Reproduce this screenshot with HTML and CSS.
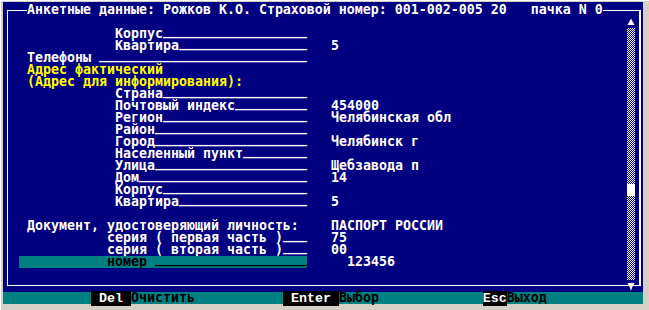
FILE: index.html
```html
<!DOCTYPE html>
<html lang="ru">
<head>
<meta charset="utf-8">
<title>Анкетные данные</title>
<link rel="stylesheet" href="styles.css">
</head>
<body>
<div class="window">
  <div class="screen">
    <div class="row title"><span class="caption">Анкетные данные: Рожков К.О. Страховой номер: 001-002-005 20   пачка N 0</span></div>
    <div class="main">
      <div class="content">
        <div class="row"></div>
        <div class="row"><span class="label sub">Корпус<span class="fill">__________________</span></span></div>
        <div class="row"><span class="label sub">Квартира<span class="fill">________________</span></span><span class="value">5</span></div>
        <div class="row"><span class="label top">Телефоны <span class="fill">__________________________</span></span></div>
        <div class="row heading">Адрес фактический</div>
        <div class="row heading">(Адрес для информирования):</div>
        <div class="row"><span class="label sub">Страна<span class="fill">__________________</span></span></div>
        <div class="row"><span class="label sub">Почтовый индекс<span class="fill">_________</span></span><span class="value">454000</span></div>
        <div class="row"><span class="label sub">Регион<span class="fill">__________________</span></span><span class="value">Челябинская обл</span></div>
        <div class="row"><span class="label sub">Район<span class="fill">___________________</span></span></div>
        <div class="row"><span class="label sub">Город<span class="fill">___________________</span></span><span class="value">Челябинск г</span></div>
        <div class="row"><span class="label sub">Населенный пункт<span class="fill">________</span></span></div>
        <div class="row"><span class="label sub">Улица<span class="fill">___________________</span></span><span class="value">Щебзавода п</span></div>
        <div class="row"><span class="label sub">Дом<span class="fill">_____________________</span></span><span class="value">14</span></div>
        <div class="row"><span class="label sub">Корпус<span class="fill">__________________</span></span></div>
        <div class="row"><span class="label sub">Квартира<span class="fill">________________</span></span><span class="value">5</span></div>
        <div class="row"></div>
        <div class="row"><span class="label top">Документ, удостоверяющий личность:</span><span class="value">ПАСПОРТ РОССИИ</span></div>
        <div class="row"><span class="label ser">серия ( первая часть )<span class="fill">___</span></span><span class="value">75</span></div>
        <div class="row"><span class="label ser">серия ( вторая часть )<span class="fill">___</span></span><span class="value">00</span></div>
        <div class="row selected"><span class="label">номер <span class="fill">___________________</span></span><span class="value">123456</span></div>
        <div class="row"></div>
      </div>
      <div class="scrollbar">
        <svg class="arrow" width="8" height="12" viewBox="0 0 8 12"><polygon points="0.5,9 7.5,9 4,2.5" fill="#fff"/></svg>
        <div class="track upper"></div>
        <div class="thumb"></div>
        <div class="track lower"></div>
        <svg class="arrow" width="8" height="12" viewBox="0 0 8 12"><polygon points="0.5,3 7.5,3 4,9.5" fill="#fff"/><rect x="3.5" y="8" width="1" height="2" fill="#fff"/></svg>
      </div>
    </div>
    <div class="row status">           <span class="key"> Del </span>Очистить           <span class="key"> Enter </span>Выбор             <span class="key">Esc</span>Выход</div>
  </div>
</div>
</body>
</html>
```

FILE: styles.css
```css
html, body {
  margin: 0;
  padding: 0;
}
body {
  width: 649px;
  height: 310px;
  overflow: hidden;
  background: #d4d0c8;
}
.window {
  width: 649px;
  height: 310px;
  box-sizing: border-box;
  padding: 2px 6px 6px 3px;
  background: #d4d0c8;
  border-top: 1px solid #ffffff;
  border-left: 1px solid #ffffff;
}
.screen {
  position: relative;
  width: 640px;
  height: 302px;
  box-sizing: border-box;
  padding-top: 2px;
  margin-left: -1px;
  margin-top: -1px;
  background: #000080;
  color: #ffffff;
  font: bold 13.29px/12px "DejaVu Sans Mono", "Liberation Mono", monospace;
}
.screen::before {
  content: "";
  position: absolute;
  left: 4px;
  top: 8px;
  width: 634px;
  height: 276px;
  box-sizing: border-box;
  border: 1px solid #ffffff;
  border-right-width: 2px;
}
.row {
  height: 12px;
  position: relative;
  white-space: pre;
}
.title {
  padding-left: 24px;
}
.caption {
  background: #000080;
}
.main {
  display: flex;
  height: 276px;
}
.content {
  width: 624px;
}
.label {
  display: inline-block;
  box-sizing: border-box;
  width: 304px;
  height: 12px;
  vertical-align: top;
}
.fill {
  line-height: 0;
  vertical-align: 3px;
}
.label.sub { padding-left: 112px; }
.label.top { padding-left: 24px; }
.label.ser { padding-left: 104px; }
.value {
  margin-left: 24px;
}
.heading {
  color: #ffff00;
  padding-left: 24px;
}
.selected .label {
  margin-left: 16px;
  width: 288px;
  padding-left: 88px;
  background: #008080;
  color: #000000;
}
.selected .value {
  margin-left: 40px;
}
.scrollbar {
  position: relative;
  width: 8px;
  display: flex;
  flex-direction: column;
}
.arrow {
  display: block;
  flex: none;
}
.track {
  flex: none;
  background: repeating-conic-gradient(#ffffff 0 25%, #000080 0 50%) 0 0 / 2px 2px;
}
.track.upper { height: 156px; }
.track.lower { height: 84px; }
.thumb {
  flex: none;
  height: 12px;
  background: #ffffff;
}
.status {
  background: #008080;
  color: #000000;
}
.key {
  background: #000000;
  color: #ffffff;
  font-family: "Liberation Mono", monospace;
  font-size: 13.333px;
}
```
